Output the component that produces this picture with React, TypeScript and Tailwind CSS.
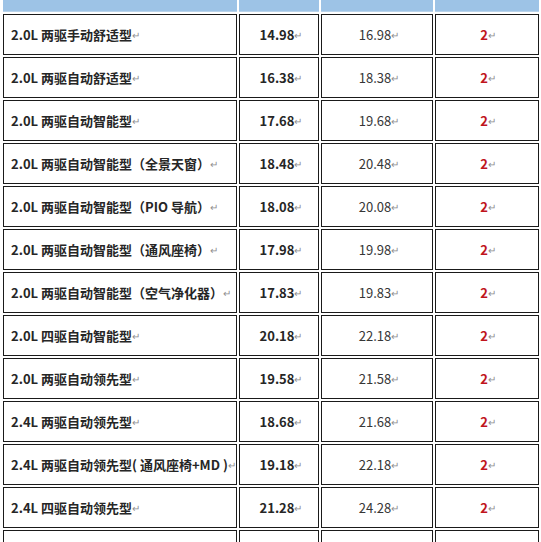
import React from "react";

const rows: [string, string, string][] = [
  ["2.0L 两驱手动舒适型", "14.98", "16.98"],
  ["2.0L 两驱自动舒适型", "16.38", "18.38"],
  ["2.0L 两驱自动智能型", "17.68", "19.68"],
  ["2.0L 两驱自动智能型（全景天窗）", "18.48", "20.48"],
  ["2.0L 两驱自动智能型（PIO 导航）", "18.08", "20.08"],
  ["2.0L 两驱自动智能型（通风座椅）", "17.98", "19.98"],
  ["2.0L 两驱自动智能型（空气净化器）", "17.83", "19.83"],
  ["2.0L 四驱自动智能型", "20.18", "22.18"],
  ["2.0L 两驱自动领先型", "19.58", "21.58"],
  ["2.4L 两驱自动领先型", "18.68", "21.68"],
  ["2.4L 两驱自动领先型( 通风座椅+MD )", "19.18", "22.18"],
  ["2.4L 四驱自动领先型", "21.28", "24.28"],
];

const Mark = () => (
  <span className="text-[10px] font-normal text-[#8f8f8f] align-[1px]">↵</span>
);

const cell = "border border-[#1a1a1a] h-[41px] p-0 align-middle whitespace-nowrap overflow-hidden leading-[18px]";

export default function App() {
  return (
    <div
      className="w-[541px] h-[542px] overflow-hidden bg-white text-[13px] text-[#262626]"
      style={{ fontFamily: '"Noto Sans CJK SC", "Noto Sans", sans-serif' }}
    >
      <table className="ml-[1px] -mt-[2px] border-separate border-spacing-[2px] table-fixed">
        <colgroup>
          <col className="w-[233px]" />
          <col className="w-[80px]" />
          <col className="w-[112px]" />
          <col className="w-[104px]" />
        </colgroup>
        <tbody>
          <tr>
            <td className="h-[12px] p-0 bg-[#9dc3e6] border-b border-[#b9d3ea]" />
            <td className="h-[12px] p-0 bg-[#9dc3e6] border-b border-[#b9d3ea]" />
            <td className="h-[12px] p-0 bg-[#9dc3e6] border-b border-[#b9d3ea]" />
            <td className="h-[12px] p-0 bg-[#9dc3e6] border-b border-[#b9d3ea]" />
          </tr>
          {rows.map(([name, a, b]) => (
            <tr key={name}>
              <td className={`${cell} pl-[7px] text-left font-bold`}>
                <div className="w-[225px] overflow-hidden whitespace-nowrap leading-[18px]">
                  {name}
                  <Mark />
                </div>
              </td>
              <td className={`${cell} text-center font-bold`}>
                <span className="pl-[4px]">{a}</span>
                <Mark />
              </td>
              <td className={`${cell} text-center text-[#363636]`}>
                <span className="pl-[4px]">{b}</span>
                <Mark />
              </td>
              <td className={`${cell} text-center font-bold text-[#c0141c]`}>
                <span className="pl-[2px]">2</span>
                <Mark />
              </td>
            </tr>
          ))}
          <tr>
            <td className={cell} />
            <td className={cell} />
            <td className={cell} />
            <td className={cell} />
          </tr>
        </tbody>
      </table>
    </div>
  );
}
